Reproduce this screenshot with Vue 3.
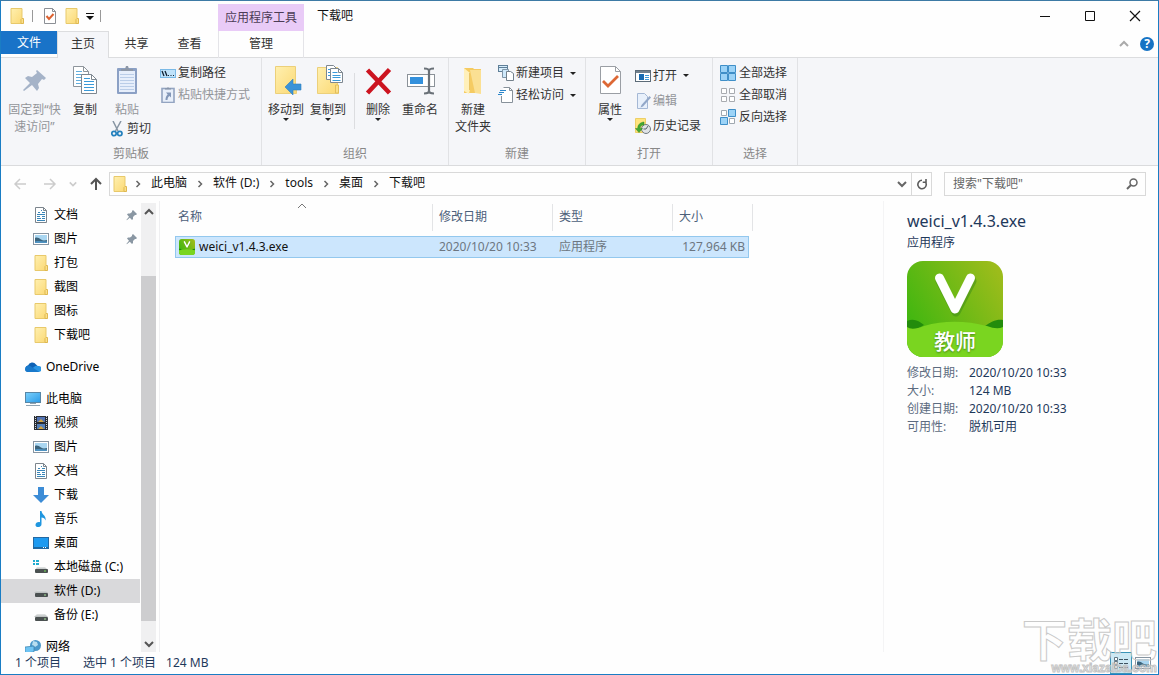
<script setup>
import { ref } from 'vue'

const query = ref('')

const tabs = ['共享', '查看']
const clipboardRows = [
  { icon: 'path', label: '复制路径' },
  { icon: 'shortcut', label: '粘贴快捷方式', off: true },
]
const newRows = [
  { icon: 'newitem', label: '新建项目', drop: true },
  { icon: 'easy', label: '轻松访问', drop: true },
]
const openRows = [
  { icon: 'open', label: '打开', drop: true },
  { icon: 'edit', label: '编辑', off: true },
  { icon: 'history', label: '历史记录' },
]
const selectRows = [
  { icon: 'selall', label: '全部选择' },
  { icon: 'selnone', label: '全部取消' },
  { icon: 'selinv', label: '反向选择' },
]
const crumbs = ['此电脑', '软件 (D:)', 'tools', '桌面', '下载吧']
const tree = [
  [
    { icon: 'doc', label: '文档', pinned: true },
    { icon: 'pic', label: '图片', pinned: true },
    { icon: 'folder', label: '打包' },
    { icon: 'folder', label: '截图' },
    { icon: 'folder', label: '图标' },
    { icon: 'folder', label: '下载吧' },
  ],
  [{ icon: 'cloud', label: 'OneDrive', root: true }],
  [
    { icon: 'pc', label: '此电脑', root: true },
    { icon: 'video', label: '视频' },
    { icon: 'pic', label: '图片' },
    { icon: 'doc', label: '文档' },
    { icon: 'down', label: '下载' },
    { icon: 'music', label: '音乐' },
    { icon: 'desk', label: '桌面' },
    { icon: 'diskc', label: '本地磁盘 (C:)' },
    { icon: 'disk', label: '软件 (D:)', current: true },
    { icon: 'disk', label: '备份 (E:)' },
  ],
  [{ icon: 'net', label: '网络', root: true }],
]
const facts = [
  ['修改日期:', '2020/10/20 10:33'],
  ['大小:', '124 MB'],
  ['创建日期:', '2020/10/20 10:33'],
  ['可用性:', '脱机可用'],
]
</script>

<template>
  <div class="window">
    <svg class="sprite" aria-hidden="true">
      <defs>
        <linearGradient id="gFolder" x1="0" y1="0" x2="1" y2="1">
          <stop offset="0" stop-color="#fff0b0" /><stop offset="1" stop-color="#fbd873" />
        </linearGradient>
        <linearGradient id="gScreen" x1="0" y1="0" x2="1" y2="1">
          <stop offset="0" stop-color="#7cd0fb" /><stop offset="1" stop-color="#2a9be8" />
        </linearGradient>
        <linearGradient id="gApp" x1="0" y1="0.8" x2="1" y2="0.2">
          <stop offset="0" stop-color="#38b60f" /><stop offset="1" stop-color="#9cbc1b" />
        </linearGradient>
        <linearGradient id="gDisk" x1="0" y1="0" x2="0" y2="1">
          <stop offset="0" stop-color="#e4e6e6" /><stop offset="1" stop-color="#b5baba" />
        </linearGradient>
      </defs>
      <symbol id="i-folder" viewBox="0 0 16 16">
        <path d="M2 .5h11v10l1 .5v4.500H2z" fill="url(#gFolder)" stroke="#e8c96b" />
        <path d="M12 15.500v-4l1-1h1.500v5z" fill="#fbe08a" stroke="#dfb851" />
      </symbol>
      <symbol id="i-check" viewBox="0 0 16 16">
        <path d="M2.500.5h8l3 3v12h-11z" fill="#fff" stroke="#8b8f95" />
        <path d="M10.500.5v3h3" fill="none" stroke="#8b8f95" />
        <path d="M4.500 8l2.500 3 4.500-5" fill="none" stroke="#dc6231" stroke-width="2" />
      </symbol>
      <symbol id="i-pin" viewBox="0 0 32 32">
        <path d="M17 6l9 8-2 2-2-1-4 5 1 4-2 3-5-6-8 6-1-1 7-7-5-5 3-2 4 1 5-4-1-2z" transform="translate(1 -1)" fill="#a5b3c8" />
      </symbol>
      <symbol id="i-smallpin" viewBox="0 0 12 12">
        <path d="M7 1l4 4-1 1H9L7 8v2L6 11 3.800 8.700.8 11.200l-.3-.4 2.500-3L1 5.500 2 4.500h2L6 3V2z" fill="#8a97a3" />
      </symbol>
      <symbol id="i-copy" viewBox="0 0 32 32">
        <path d="M4.500 1.500h10l5 5v15h-15z" fill="#fff" stroke="#8e959c" />
        <path d="M14.500 1.500v5h5" fill="none" stroke="#8e959c" />
        <path d="M7 6.500h6M7 9.500h10M7 12.500h10M7 15.500h10M7 18.500h10" stroke="#62aede" />
        <path d="M12.500 9.500h10l5 5v14h-15z" fill="#fff" stroke="#7d8790" />
        <path d="M22.500 9.500v5h5" fill="none" stroke="#7d8790" />
        <path d="M15 13.500h6M15 16.500h10M15 19.500h10M15 22.500h10M15 25.500h10" stroke="#3a9ad9" />
      </symbol>
      <symbol id="i-paste" viewBox="0 0 32 32">
        <rect x="6" y="3" width="20" height="26" rx="1" fill="#8ba0c5" />
        <rect x="8" y="6" width="16" height="21" fill="#e6eefb" />
        <path d="M9 9.500h14M9 12.500h14M9 15.500h14M9 18.500h14M9 21.500h14M9 24.500h14" stroke="#bacde8" />
        <path d="M10 6V4h4l1-3h2l1 3h4v2z" fill="#8d97a7" />
      </symbol>
      <symbol id="i-cut" viewBox="0 0 16 16">
        <path d="M4 0l5 10M12 0L6.500 10" stroke="#8795a3" stroke-width="1.500" />
        <circle cx="5" cy="12.500" r="2.200" fill="none" stroke="#2380bd" stroke-width="1.700" />
        <circle cx="10.800" cy="12.500" r="2.200" fill="none" stroke="#2380bd" stroke-width="1.700" />
      </symbol>
      <symbol id="i-path" viewBox="0 0 16 16">
        <rect x=".5" y="4.500" width="15" height="8" fill="#bfe2fa" stroke="#7ab9e6" />
        <path d="M2 6l2 5M5 6l2 5" stroke="#123" stroke-width="1.300" />
        <path d="M8 10.500h1M10.500 10.500h1M13 10.500h1" stroke="#123" />
      </symbol>
      <symbol id="i-shortcut" viewBox="0 0 16 16">
        <rect x="2" y="1.500" width="12" height="14" fill="#e8effa" stroke="#93a4c1" stroke-width="1.600" />
        <path d="M5 2.500V1.300h2L8 0l1 1.300h2v1.200z" fill="#8794a8" />
        <path d="M6 5.500h5v5L9.500 9C8 10 7.500 11.500 7.500 13H5.500c0-2.500.8-4.300 2.200-5.600z" fill="#8397b8" />
      </symbol>
      <symbol id="i-move" viewBox="0 0 32 32">
        <path d="M5.500 1.500h20v21l1 1v5h-21z" fill="url(#gFolder)" stroke="#ecd07a" />
        <path d="M15 22l8-8v5h8v6h-8v5z" fill="#3a93d8" stroke="#2f7fbf" stroke-width=".6" />
      </symbol>
      <symbol id="i-copyto" viewBox="0 0 32 32">
        <path d="M5.500 2.500h20v20l1 1v5h-21z" fill="url(#gFolder)" stroke="#ecd07a" />
        <path d="M23.500 28v-8h3v8z" fill="#fbe08a" stroke="#e2bf5c" />
        <path d="M14.500.5h7l3 3v11h-10z" fill="#fff" stroke="#7d8790" />
        <path d="M18.500 3.500h8l4 4v10h-12z" fill="#fff" stroke="#7d8790" />
        <path d="M16 4.500h2M16 7.500h2M16 10.500h2M20.500 7.500h5M20.500 10.500h8M20.500 12.500h8M20.500 15.500h8" stroke="#3a9ad9" />
        <path d="M26.500 3.500v4h4" fill="none" stroke="#7d8790" />
      </symbol>
      <symbol id="i-delete" viewBox="0 0 32 32">
        <path d="M5.500 5l22 23M27.500 4.500L5.500 28" stroke="#cc1420" stroke-width="4.500" />
      </symbol>
      <symbol id="i-rename" viewBox="0 0 32 32">
        <rect x="3.500" y="9.500" width="27" height="12" fill="#fff" stroke="#8b9299" />
        <rect x="6" y="12" width="13" height="7" fill="#3390dc" />
        <path d="M20 3.500c3 0 5 .5 5 2.500v20c0 2-2 2.500-5 2.500M30 3.500c-3 0-5 .5-5 2.500M25 26c0 2 2 2.500 5 2.500" fill="none" stroke="#6a7178" stroke-width="2.200" />
      </symbol>
      <symbol id="i-newfolder" viewBox="0 0 32 32">
        <path d="M7 3h9l1 1h7v24H7z" fill="#f5cb62" />
        <path d="M13 5h5l6 0v24l-6-1z" fill="#fbe093" />
        <path d="M7 3l6 5v16l-1 5-5-3z" fill="#fff0ba" />
        <path d="M12.500 8v17" stroke="#eac566" />
      </symbol>
      <symbol id="i-newitem" viewBox="0 0 16 16">
        <rect x=".5" y=".5" width="9" height="6" fill="#d6edfc" stroke="#5f7f98" />
        <path d="M1 2.500h8" stroke="#5f7f98" />
        <path d="M4.500 4.500h6v8h-6z" fill="#cfe9fb" stroke="#8096a8" />
        <path d="M8.500 6.500h4l3 2v7h-7z" fill="#fff" stroke="#73808b" />
      </symbol>
      <symbol id="i-easy" viewBox="0 0 16 16">
        <path d="M3.500 9v6.500h11v-12l-3-3h-6" fill="#fff" stroke="#87919a" />
        <path d="M11.500.5v3h3" fill="none" stroke="#87919a" />
        <path d="M2 3.500h6M1 5.500h5M0 7.500h4" stroke="#2b86ca" />
      </symbol>
      <symbol id="i-props" viewBox="0 0 32 32">
        <path d="M6.500 1.500h15l5 5v22h-20z" fill="#fff" stroke="#9a9ea4" />
        <path d="M21.500 1.500v5h5" fill="none" stroke="#9a9ea4" />
        <path d="M9 16l5 5 10-10" fill="none" stroke="#dd6835" stroke-width="2.800" />
      </symbol>
      <symbol id="i-open" viewBox="0 0 16 16">
        <rect x=".5" y="2.500" width="15" height="11" fill="#fff" stroke="#5c6b78" />
        <path d="M1 4h14" stroke="#71808d" stroke-width="2" />
        <rect x="4" y="6" width="5" height="6" fill="#176ab1" />
        <path d="M10 7.500h4M10 9.500h4M10 11.500h4" stroke="#3e98d7" />
      </symbol>
      <symbol id="i-edit" viewBox="0 0 16 16">
        <path d="M2.500.5h7l3 3v12h-10z" fill="#e8f0fb" stroke="#a5b8d5" />
        <path d="M14.500 3l1.500 1.500-8 9-2.500 1 1-2.500z" fill="#92a7c8" />
      </symbol>
      <symbol id="i-history" viewBox="0 0 16 16">
        <path d="M.5.500h10v14H.5z" fill="#ffe47f" stroke="#edcf66" />
        <circle cx="11" cy="11" r="4.500" fill="#dfe3e6" stroke="#717980" />
        <path d="M11 11l2-3M11 11H8.500" fill="none" stroke="#59616a" />
        <path d="M9 4v3C6 7 5 8.500 5.300 10.500H7.500L4 14.500.5 10.500h2.300C2.500 7 5 4.500 9 4z" fill="#43a832" stroke="#2c8724" stroke-width=".5" />
      </symbol>
      <symbol id="i-selall" viewBox="0 0 16 16">
        <path d="M.5.500h7v7h-7zM8.500.5h7v7h-7zM.5 8.500h7v7h-7zM8.500 8.500h7v7h-7z" fill="#9cd3f7" stroke="#3f8fc8" />
      </symbol>
      <symbol id="i-selnone" viewBox="0 0 16 16">
        <path d="M1.500 1.500h5v5h-5zM9.500 1.500h5v5h-5zM1.500 9.500h5v5h-5zM9.500 9.500h5v5h-5z" fill="#fff" stroke="#a8abb0" />
      </symbol>
      <symbol id="i-selinv" viewBox="0 0 16 16">
        <path d="M1.500 1.500h5v5h-5zM9.500 9.500h5v5h-5z" fill="#fff" stroke="#a0a8b0" />
        <path d="M8.500.5h7v7h-7zM.5 8.500h7v7h-7z" fill="#9cd3f7" stroke="#3f8fc8" />
      </symbol>
      <symbol id="i-doc" viewBox="0 0 16 16">
        <path d="M2.500.5h8l3 3v12h-11z" fill="#fff" stroke="#7c858d" />
        <path d="M5 5.500h2M8 3.500h1M9 5.500h3M4 7.500h8M4 9.500h3M9 9.500h3M4 11.500h4M9 11.500h3M4 13.500h8" stroke="#3a86b8" />
        <path d="M10.500.5v3h3" fill="none" stroke="#7c858d" />
      </symbol>
      <symbol id="i-pic" viewBox="0 0 16 16">
        <rect x=".5" y="2.500" width="15" height="11" fill="#fff" stroke="#8795a2" />
        <rect x="2" y="4" width="12" height="8" fill="#a9d6f1" />
        <path d="M2 7c2-1 4 0 6 1.500s4 1 6 .5v3H2z" fill="#3c647c" />
        <path d="M2 10.500c4-1 8 0 12 0V12H2z" fill="#4f93c2" />
      </symbol>
      <symbol id="i-cloud" viewBox="0 0 16 16">
        <path d="M3.500 13A3.300 3.300 0 013 6.500 4.500 4.500 0 0111 5.500l2 2L8 13z" fill="#0f62b5" />
        <path d="M9 8a4 4 0 014-1 3 3 0 011 6H4L3 12.500z" fill="#2a96e4" />
        <path d="M0 10.500c0-4 4-5 6-3l8 5.200c-1 .4-8 .3-11.500.3C1 13 0 12 0 10.500z" fill="#1979cb" />
      </symbol>
      <symbol id="i-pc" viewBox="0 0 16 16">
        <rect x=".5" y="1.500" width="15" height="10" fill="url(#gScreen)" stroke="#5786a6" />
        <path d="M5 12.500h6M1 14.500h14" stroke="#90a3b1" />
      </symbol>
      <symbol id="i-video" viewBox="0 0 16 16">
        <rect x="1" y="1" width="14" height="14" fill="#292d33" />
        <path d="M2.500 1v14M13.500 1v14" stroke="#d5d8da" stroke-dasharray="1 1" />
        <rect x="4" y="2" width="8" height="5" fill="#5273b3" /><rect x="4" y="9" width="8" height="5" fill="#5580b9" />
        <path d="M5 7l3-3 3 3M5 14l3-3 3 3" fill="#d2a340" />
      </symbol>
      <symbol id="i-down" viewBox="0 0 16 16"><path d="M5 0h6v8h5l-8 8-8-8h5z" fill="#3c8cd6" /></symbol>
      <symbol id="i-music" viewBox="0 0 16 16">
        <path d="M7 0h1.500c.5 4 5 4.500 4 9.500-.5-2-2-3-4-3V13c0 4-6 4-6 1 0-2 2-3.300 4.500-2.800z" fill="#1f96df" />
      </symbol>
      <symbol id="i-desk" viewBox="0 0 16 16">
        <rect x=".5" y="2.500" width="15" height="11" fill="#1e9af0" stroke="#2368a3" />
        <path d="M1 12.500h14" stroke="#1c689e" /><path d="M10 12.500h1M12 12.500h1" stroke="#fff" />
      </symbol>
      <symbol id="i-disk" viewBox="0 0 16 16">
        <path d="M4 7h8l3 3H1z" fill="url(#gDisk)" /><rect x="2" y="10" width="13" height="4" rx="1" fill="#4b5151" />
        <path d="M11 12h2" stroke="#a8e39b" />
      </symbol>
      <symbol id="i-diskc" viewBox="0 0 16 16">
        <path d="M4 8h8l3 3H2z" fill="url(#gDisk)" /><rect x="2" y="10" width="13" height="4" rx="1" fill="#4b5151" />
        <path d="M11 12h2" stroke="#78e05b" />
        <path d="M0 1h2v2H0zM3 1h3v2H3zM0 4h2v2H0zM3 4h3v2H3z" fill="#1fabcf" />
      </symbol>
      <symbol id="i-net" viewBox="0 0 16 16">
        <circle cx="10.500" cy="6.500" r="5.500" fill="#4b98ca" />
        <path d="M8 2l4 1 1 3-3 2-3-2z" fill="#b8def0" />
        <path d="M0 8l9-1v6l-9 1z" fill="#6fc4f3" stroke="#3a80ab" stroke-width=".7" />
        <path d="M2 15.500h10" stroke="#7c96a8" />
      </symbol>
      <symbol id="i-app" viewBox="0 0 96 96">
        <rect width="96" height="96" rx="16" fill="url(#gApp)" />
        <path d="M0 60c7-3 12 0 17 4L8 69H0zM96 59c-7-1-12 2-18 6l9 4h9z" fill="#238c0c" />
        <path d="M0 66Q5 70 17 65C38 59 60 60 80 65Q90 69 96 66V80a16 16 0 01-16 16H16A16 16 0 010 80z" fill="#7ad520" />
        <path d="M32 18l16 31 16-31" transform="translate(1 2)" fill="none" stroke="#3c8a16" stroke-opacity=".5" stroke-width="9" stroke-linecap="round" stroke-linejoin="round" />
        <path d="M32.500 17l15.500 31 15.500-31" fill="none" stroke="#fff" stroke-width="9" stroke-linecap="round" stroke-linejoin="round" />
      </symbol>
      <symbol id="i-chev" viewBox="0 0 10 10"><path d="M3.500 2l3 3-3 3" fill="none" stroke="currentColor" stroke-width="1.500" /></symbol>
      <symbol id="i-vee" viewBox="0 0 10 10"><path d="M1 3l4 4 4-4" fill="none" stroke="currentColor" stroke-width="2" /></symbol>
      <symbol id="i-caret" viewBox="0 0 10 10"><path d="M1 7l4-4 4 4" fill="none" stroke="currentColor" stroke-width="2" /></symbol>
      <symbol id="i-back" viewBox="0 0 14 14"><path d="M13 7H2M7 2L2 7l5 5" fill="none" stroke="currentColor" stroke-width="1.500" /></symbol>
      <symbol id="i-fwd" viewBox="0 0 14 14"><path d="M1 7h11M7 2l5 5-5 5" fill="none" stroke="currentColor" stroke-width="1.500" /></symbol>
      <symbol id="i-up" viewBox="0 0 14 14"><path d="M7 13V2M2 7l5-5 5 5" fill="none" stroke="currentColor" stroke-width="2" /></symbol>
    </svg>

    <header class="titlebar">
      <div class="quick">
        <svg class="i16"><use href="#i-folder" /></svg>
        <i class="bar lead"></i>
        <button aria-label="属性"><svg class="i16"><use href="#i-check" /></svg></button>
        <button aria-label="新建文件夹"><svg class="i16"><use href="#i-folder" /></svg></button>
        <button class="more" aria-label="自定义快速访问工具栏"><svg viewBox="0 0 8 8"><path d="M0 1.500h8" stroke="#111" /><path d="M0 4h8L4 8z" fill="#111" /></svg></button>
        <i class="bar"></i>
      </div>
      <div class="context">应用程序工具</div>
      <h1>下载吧</h1>
      <div class="controls">
        <button aria-label="最小化"><svg viewBox="0 0 12 12"><path d="M1 6.500h10" stroke="#111" /></svg></button>
        <button aria-label="最大化"><svg viewBox="0 0 12 12"><path d="M1.500 1.500h9v9h-9z" fill="none" stroke="#111" /></svg></button>
        <button aria-label="关闭"><svg viewBox="0 0 12 12"><path d="M1 1l10 10M11 1L1 11" stroke="#111" stroke-width="1.200" /></svg></button>
      </div>
    </header>

    <nav class="tabs">
      <button class="file">文件</button>
      <button class="home">主页</button>
      <button v-for="t in tabs" :key="t">{{ t }}</button>
      <button class="manage">管理</button>
      <span class="grow"></span>
      <button class="fold" aria-label="最小化功能区"><svg class="i10"><use href="#i-caret" /></svg></button>
      <button class="help" aria-label="帮助">?</button>
    </nav>

    <section class="ribbon">
      <div class="group clip">
        <div class="tools">
          <button class="big wide off"><svg><use href="#i-pin" /></svg><span>固定到“快<br />速访问”</span></button>
          <button class="big"><svg><use href="#i-copy" /></svg><span>复制</span></button>
          <div class="stack">
            <button class="big off"><svg><use href="#i-paste" /></svg><span>粘贴</span></button>
            <button class="small"><svg class="i16"><use href="#i-cut" /></svg><span>剪切</span></button>
          </div>
          <div class="rows">
            <button v-for="r in clipboardRows" :key="r.label" class="small" :class="{ off: r.off }"><svg class="i16"><use :href="'#i-' + r.icon" /></svg><span>{{ r.label }}</span></button>
          </div>
        </div>
        <h2>剪贴板</h2>
      </div>
      <div class="group org">
        <div class="tools">
          <button class="big"><svg><use href="#i-move" /></svg><span>移动到</span><i class="drop"></i></button>
          <button class="big"><svg><use href="#i-copyto" /></svg><span>复制到</span><i class="drop"></i></button>
          <i class="divider"></i>
          <button class="big"><svg><use href="#i-delete" /></svg><span>删除</span><i class="drop"></i></button>
          <button class="big"><svg><use href="#i-rename" /></svg><span>重命名</span></button>
        </div>
        <h2>组织</h2>
      </div>
      <div class="group new">
        <div class="tools">
          <button class="big"><svg><use href="#i-newfolder" /></svg><span>新建<br />文件夹</span></button>
          <div class="rows">
            <button v-for="r in newRows" :key="r.label" class="small"><svg class="i16"><use :href="'#i-' + r.icon" /></svg><span>{{ r.label }}</span><i class="drop"></i></button>
          </div>
        </div>
        <h2>新建</h2>
      </div>
      <div class="group opens">
        <div class="tools">
          <button class="big"><svg><use href="#i-props" /></svg><span>属性</span><i class="drop"></i></button>
          <div class="rows tall">
            <button v-for="r in openRows" :key="r.label" class="small" :class="{ off: r.off }"><svg class="i16"><use :href="'#i-' + r.icon" /></svg><span>{{ r.label }}</span><i v-if="r.drop" class="drop"></i></button>
          </div>
        </div>
        <h2>打开</h2>
      </div>
      <div class="group sel">
        <div class="tools">
          <div class="rows">
            <button v-for="r in selectRows" :key="r.label" class="small"><svg class="i16"><use :href="'#i-' + r.icon" /></svg><span>{{ r.label }}</span></button>
          </div>
        </div>
        <h2>选择</h2>
      </div>
    </section>

    <div class="location">
      <div class="travel">
        <button aria-label="后退"><svg class="i14"><use href="#i-back" /></svg></button>
        <button aria-label="前进"><svg class="i14"><use href="#i-fwd" /></svg></button>
        <button class="recent" aria-label="最近浏览的位置"><svg class="i8"><use href="#i-vee" /></svg></button>
        <button class="up" aria-label="上移"><svg class="i14"><use href="#i-up" /></svg></button>
      </div>
      <div class="address">
        <svg class="i16"><use href="#i-folder" /></svg>
        <template v-for="c in crumbs" :key="c">
          <svg class="i10"><use href="#i-chev" /></svg>
          <a href="#">{{ c }}</a>
        </template>
        <span class="grow"></span>
        <button class="hist" aria-label="历史记录"><svg class="i10"><use href="#i-vee" /></svg></button>
        <button class="refresh" aria-label="刷新"><svg viewBox="0 0 12 12"><path d="M3 3.500A4.200 4.200 0 106 2.300M2 1v3.300h3.300" transform="translate(12 0) scale(-1 1)" fill="none" stroke="#5c5c5c" stroke-width="1.600" /></svg></button>
      </div>
      <label class="search">
        <input v-model="query" type="text" placeholder='搜索"下载吧"' aria-label="搜索" />
        <svg viewBox="0 0 12 12"><circle cx="7.500" cy="4.500" r="3.500" fill="none" stroke="#666" stroke-width="1.500" /><path d="M5 7L1 11" stroke="#666" stroke-width="2" /></svg>
      </label>
    </div>

    <main class="body">
      <aside class="side">
        <nav class="tree">
          <ul v-for="(g, n) in tree" :key="n">
            <li v-for="e in g" :key="e.label">
              <a href="#" :class="{ root: e.root, current: e.current }">
                <svg class="i16"><use :href="'#i-' + e.icon" /></svg>
                <span>{{ e.label }}</span>
                <svg v-if="e.pinned" class="pinned"><use href="#i-smallpin" /></svg>
              </a>
            </li>
          </ul>
        </nav>
        <div class="scroll">
          <button aria-label="向上滚动"><svg class="i10"><use href="#i-caret" /></svg></button>
          <div class="track"><div class="thumb"></div></div>
          <button aria-label="向下滚动"><svg class="i10"><use href="#i-vee" /></svg></button>
        </div>
      </aside>

      <section class="files">
        <table>
          <colgroup><col class="c-name" /><col class="c-mid" /><col class="c-mid" /><col class="c-size" /></colgroup>
          <thead>
            <tr>
              <th class="first">名称<svg class="sort i10" viewBox="0 0 10 10"><path d="M1 7l4-4 4 4" fill="none" stroke="#777" /></svg></th>
              <th>修改日期</th>
              <th>类型</th>
              <th class="last">大小</th>
            </tr>
          </thead>
          <tbody>
            <tr>
              <td class="name"><div><svg class="i16" viewBox="0 0 96 96"><use href="#i-app" /></svg><span>weici_v1.4.3.exe</span></div></td>
              <td>2020/10/20 10:33</td>
              <td>应用程序</td>
              <td class="num">127,964 KB</td>
            </tr>
          </tbody>
        </table>
      </section>

      <aside class="details">
        <h2>weici_v1.4.3.exe</h2>
        <p>应用程序</p>
        <div class="app"><svg><use href="#i-app" /></svg><span>教师</span></div>
        <dl>
          <template v-for="f in facts" :key="f[0]"><dt>{{ f[0] }}</dt><dd>{{ f[1] }}</dd></template>
        </dl>
      </aside>
    </main>

    <footer class="status">
      <span>1 个项目</span>
      <span class="chosen">选中 1 个项目</span>
      <span>124 MB</span>
      <span class="grow"></span>
      <button class="view on" aria-label="详细信息"><svg viewBox="0 0 16 16"><path d="M1.500 2.500h3v3h-3zM1.500 6.500h3v3h-3zM1.500 10.500h3v3h-3z" fill="#fff" stroke="#617684" /><path d="M6 4.500h4M11 4.500h4M6 8.500h4M11 8.500h4M6 12.500h4M11 12.500h4" stroke="#3e5361" /></svg></button>
      <button class="view" aria-label="大图标"><svg class="i14"><use href="#i-pic" /></svg></button>
    </footer>
    <div class="mark" aria-hidden="true"><b>下载吧</b><small>www.xiazaiba.com</small></div>
  </div>
</template>

<style>
html, body { margin: 0; background: #fff; }
</style>

<style scoped>
.window {
  position: relative; box-sizing: border-box; height: 100vh; overflow: hidden;
  display: flex; flex-direction: column; border: 1px solid #1a7dc4; border-top-color: #3d7aa5;
  background: #fefefe; color: #111;
  font: 12px/16px "Noto Sans", "Noto Sans CJK SC", sans-serif;
}
.window *, .window *::after { box-sizing: border-box; }
.sprite { position: absolute; width: 0; height: 0; }
button { margin: 0; padding: 0; border: 0; background: none; color: inherit; font: inherit; }
a { color: inherit; text-decoration: none; }
h1, h2, p, ul, dl, dd { margin: 0; padding: 0; font-size: 12px; font-weight: 400; list-style: none; }
svg { display: block; flex: none; }
.i8 { width: 8px; height: 8px; }
.i10 { width: 10px; height: 10px; }
.i14 { width: 14px; height: 14px; }
.i16 { width: 16px; height: 16px; }
.grow { flex: 1; }

.titlebar { display: flex; height: 30px; flex: none; }
.quick { display: flex; align-items: center; gap: 6px; width: 217px; padding-left: 8px; }
.quick .bar { width: 1px; height: 12px; background: #999; }
.quick .lead { margin: 0 3px 0 1px; }
.quick .more svg { width: 8px; height: 8px; }
.context { width: 86px; margin-top: 3px; background: #e9cbf7; text-align: center; line-height: 27px; color: #4b3c55; }
h1 { padding-left: 13px; line-height: 30px; }
.controls { display: flex; margin: 0 1px 0 auto; }
.controls button { width: 45px; display: flex; align-items: center; justify-content: center; }
.controls svg { width: 12px; height: 12px; }

.tabs { display: flex; height: 27px; flex: none; background: linear-gradient(#dcdddf, #dcdddf) bottom / 100% 1px no-repeat; color: #333; }
.tabs button { width: 53px; line-height: 24px; padding-bottom: 2px; }
.tabs .file { width: 56px; height: 23px; padding: 0; background: #1973c8; color: #fff; }
.tabs .home { width: 52px; margin-right: 1px; border: 1px solid #dcdddf; border-bottom: 0; background: #f5f6f9; }
.tabs .manage { width: 86px; margin-left: 2px; border: solid #e4e4e8; border-width: 0 1px; }
.tabs .fold { width: 20px; display: flex; align-items: center; justify-content: center; color: #aaa; }
.tabs .help { width: 14px; height: 14px; margin: 6px 4px 0 6px; padding: 0; border-radius: 50%; background: #1673c4; color: #fff; font-weight: 700; line-height: 14px; }

.ribbon { display: flex; height: 108px; flex: none; background: #f5f6f9; border-bottom: 1px solid #dadbdd; color: #333; }
.group { display: flex; flex-direction: column; border-right: 1px solid #e1e2e5; }
.group h2 { height: 20px; line-height: 18px; text-align: center; color: #888; }
.tools { display: flex; flex: 1; padding-top: 3px; }
.clip { width: 261px; }
.clip .tools { padding-left: 4px; }
.org { width: 187px; }
.org .tools { padding-left: 3px; }
.new { width: 137px; }
.new .tools { padding-left: 3px; }
.opens { width: 127px; }
.opens .tools { padding-left: 3px; }
.sel { width: 85px; }
.sel .tools { padding-left: 7px; }
.big { display: flex; flex-direction: column; align-items: center; width: 42px; height: 72px; padding-top: 4px; line-height: 17px; white-space: nowrap; }
.big.wide { width: 59px; }
.big svg { width: 32px; height: 32px; margin-bottom: 4px; }
.off { color: #93959a; }
.drop { flex: none; border: 3px solid transparent; border-top-color: #222; border-bottom: 0; }
.stack .big { height: 58px; }
.stack .small { height: 20px; margin-left: 3px; }
.small { display: flex; align-items: center; gap: 2px; height: 22px; white-space: nowrap; }
.small .drop { margin-left: 4px; }
.rows { display: flex; flex-direction: column; padding: 1px 0 0 4px; }
.clip .rows { padding-left: 9px; }
.sel .rows { padding-left: 0; }
.sel .small { gap: 3px; }
.rows.tall { padding-top: 2px; }
.rows.tall .small { height: 25px; }
.divider { width: 1px; height: 56px; margin: 12px 2px 0 5px; background: #dcdde0; }

.location { display: flex; align-items: center; height: 35px; flex: none; padding-right: 12px; color: #111; }
.travel { display: flex; align-items: center; width: 108px; padding-left: 12px; gap: 16px; color: #ccc; }
.travel .recent { margin: 0 -4px; }
.travel .up { color: #555; }
.address { display: flex; align-items: center; flex: 1; height: 24px; padding-left: 2px; border: 1px solid #d9d9d9; white-space: nowrap; }
.address .i10 { margin: 0 8px 0 5px; color: #666; }
.address a + .i10 { margin-left: 8px; }
.address a { line-height: 18px; padding-bottom: 2px; }
.address .hist .i10 { margin: 0 4px; }
.refresh { display: flex; align-items: center; justify-content: center; width: 20px; height: 22px; border-left: 1px solid #d9d9d9; }
.refresh svg { width: 12px; height: 12px; }
.search { display: flex; align-items: center; width: 202px; height: 24px; margin-left: 12px; padding: 0 7px 0 8px; border: 1px solid #d9d9d9; }
.search input { flex: 1; min-width: 0; padding: 0; border: 0; outline: 0; background: none; font: inherit; color: #111; }
.search input::placeholder { color: #666; opacity: 1; }
.search svg { width: 12px; height: 12px; }

.body { display: flex; flex: 1; min-height: 0; }
.side { display: flex; width: 159px; padding-top: 2px; border-right: 1px solid #efeff1; }
.tree { width: 139px; overflow: hidden; color: #000; }
.tree ul + ul { margin-top: 8px; }
.tree a { display: flex; align-items: center; gap: 5px; height: 24px; padding: 0 2px 0 32px; white-space: nowrap; }
.tree a.root { padding-left: 24px; }
.tree a.current { background: #d9d9db; }
.tree .pinned { width: 12px; height: 12px; margin-left: auto; }
.scroll { display: flex; flex-direction: column; width: 15px; margin-left: 1px; background: #f0f0f1; color: #555; }
.scroll button { display: flex; align-items: center; justify-content: center; height: 17px; }
.track { flex: 1; padding-top: 56px; padding-bottom: 14px; }
.thumb { height: 100%; background: #cdcdcf; }

.files { flex: 1; min-width: 0; padding: 2px 0 0 15px; }
table { width: 574px; table-layout: fixed; border-collapse: separate; border-spacing: 0; }
.c-name { width: 258px; }
.c-mid { width: 120px; }
.c-size { width: 76px; }
th { position: relative; height: 33px; padding: 0 0 6px 6px; text-align: left; font-weight: 400; color: #4c607a; }
th.first { padding-left: 3px; }
th::after { content: ""; position: absolute; right: 0; top: 1px; width: 1px; height: 27px; background: #e3e4e6; }
th.last::after { right: -4px; }
.sort { position: absolute; left: 122px; top: -2px; }
td { height: 22px; padding: 0 0 1px 6px; border: solid #93c8ee; border-width: 1px 0; background: #cce6fd; color: #6d7681; white-space: nowrap; }
td.name { padding-left: 3px; border-left-width: 1px; color: #111; }
td.name div { display: flex; align-items: center; gap: 4px; }
td.num { padding-right: 3px; border-right-width: 1px; text-align: right; }

.details { width: 275px; padding: 9px 0 0 23px; border-left: 1px solid #f4f4f5; color: #1e395b; }
.details h2 { font-size: 16px; line-height: 22px; }
.details p { line-height: 21px; }
.app { position: relative; width: 96px; height: 96px; margin: 8px 0 7px; }
.app svg { width: 96px; height: 96px; }
.app span { position: absolute; left: 0; right: 0; bottom: 4px; text-align: center; color: #fff; font-size: 21px; line-height: 24px; font-weight: 500; text-shadow: 0 1px 2px #47851b; }
dl { display: grid; grid-template-columns: 62px 1fr; line-height: 18px; }
dt { color: #5c6b80; }

.status { display: flex; align-items: center; height: 22px; flex: none; padding: 0 4px 0 14px; color: #1e395b; }
.chosen { margin: 0 10px 0 22px; }
.view { display: flex; align-items: center; justify-content: center; width: 22px; height: 22px; }
.view.on { border: 1px solid #3a94b8; background: #cce8f4; }
.view svg { width: 16px; height: 16px; }
.mark { position: absolute; right: 1px; bottom: 0; text-align: right; color: transparent; white-space: nowrap; pointer-events: none; }
.mark b { display: block; font-size: 45px; line-height: 44px; font-weight: 700; -webkit-text-stroke: 1px #c9c9c9; }
.mark small { display: block; font: 700 12px/12px "Liberation Sans", sans-serif; -webkit-text-stroke: 1px #c4c4c4; }
</style>
